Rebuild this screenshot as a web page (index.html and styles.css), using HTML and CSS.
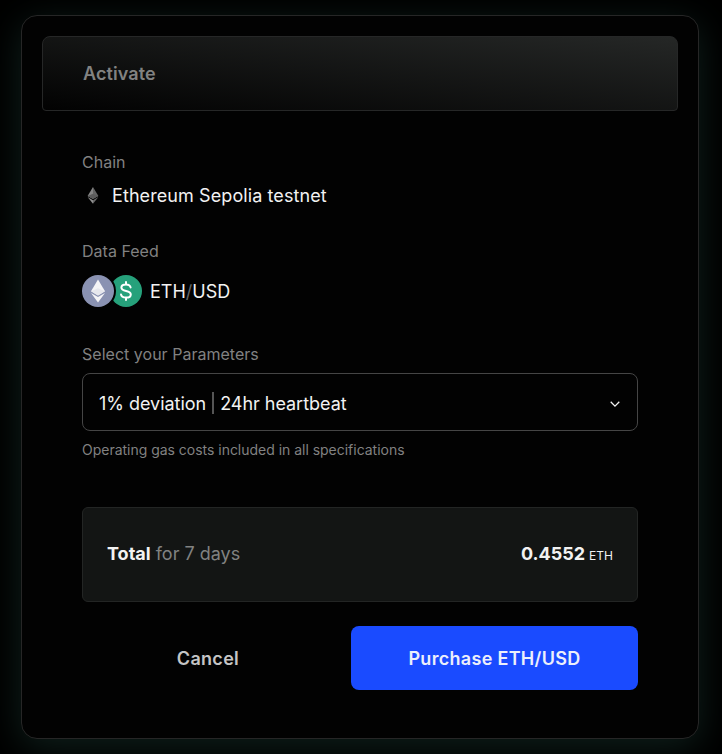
FILE: index.html
```html
<!DOCTYPE html>
<html lang="en">
<head>
<meta charset="utf-8">
<title>Activate</title>
<link rel="stylesheet" href="styles.css">
</head>
<body>
<main class="card">
  <header class="card-header"><h1>Activate</h1></header>
  <div class="content">
    <section class="chain">
      <div class="label">Chain</div>
      <div class="chain-value">
        <svg class="chain-icon" width="22" height="22" viewBox="0 0 22 22">
          <path fill="#858585" d="M11 2 5.6 11 11 14z"/><path fill="#656565" d="M11 2l5.4 9L11 14z"/>
          <path fill="#5c5c5c" d="M5.6 11 11 8.8l5.4 2.2L11 14z"/>
          <path fill="#909090" d="M5.6 12.1 11 15.2V18.8z"/><path fill="#6a6a6a" d="M16.4 12.1 11 15.2V18.8z"/>
        </svg>
        <span>Ethereum Sepolia testnet</span>
      </div>
    </section>
    <section class="feed">
      <div class="label">Data Feed</div>
      <div class="feed-value">
        <svg width="60" height="32" viewBox="0 0 60 32">
          <circle cx="44" cy="16" r="16" fill="#26a17b"/>
          <circle cx="16" cy="16" r="18" fill="#020202"/>
          <circle cx="16" cy="16" r="16" fill="#8a92b2"/>
          <path fill="#f4f4f6" d="M16 4.5 9 16.2l7 4.2 7-4.2z"/>
          <path fill="#e6e7ed" d="M16 13.2l-7 3 7 4.2 7-4.2z"/>
          <path fill="#f4f4f6" d="M9 17.9l7 4.2 7-4.2-7 9.6z"/>
          <path fill="none" stroke="#fff" stroke-width="2" stroke-linecap="round" stroke-linejoin="round" d="M44 7v2.4M44 22.6V25M48.6 12.4c-.4-2-2-3-4.6-3-2.8 0-4.6 1.2-4.6 3.2 0 4.7 9.4 2.1 9.4 6.8 0 2-1.9 3.2-4.8 3.2s-4.7-1.1-5-3.2"/>
        </svg>
        <span class="pair">ETH<span class="muted">/</span>USD</span>
      </div>
    </section>
    <section class="parameters">
      <div class="label">Select your Parameters</div>
      <button class="select" type="button">
        <span class="option">1% deviation<i class="divider"></i>24hr heartbeat</span>
        <svg width="12" height="12" viewBox="0 0 12 12"><path d="M1.7 3.8 6 8.1l4.3-4.3" fill="none" stroke="#f2f2f2" stroke-width="1.3"/></svg>
      </button>
      <p class="hint">Operating gas costs included in all specifications</p>
    </section>
    <section class="total">
      <div class="summary"><strong>Total</strong> <span class="period">for 7 days</span></div>
      <div class="amount"><strong>0.4552</strong><small>ETH</small></div>
    </section>
    <footer class="actions">
      <button class="cancel" type="button">Cancel</button>
      <button class="purchase" type="button">Purchase ETH/USD</button>
    </footer>
  </div>
</main>
</body>
</html>
```
FILE: styles.css
```css
* { box-sizing: border-box; }
html { background: #000; }
body {
  margin: 0;
  padding: 15px 23px 15px 21px;
  height: 754px;
  overflow: hidden;
  background: #000;
  color: #f2f2f2;
  font: 400 18px/28px Inter, "Liberation Sans", sans-serif;
}
button { font: inherit; color: inherit; border: 0; padding: 0; background: none; }
.card {
  height: 724px;
  padding: 20px;
  border: 1px solid #262626;
  border-radius: 16px;
  background: #020202;
  box-shadow: 0 8px 36px #0f201c;
}
.card-header {
  display: flex;
  align-items: center;
  height: 75px;
  padding-left: 40px;
  border: 1px solid #262727;
  border-radius: 8px 8px 4px 4px;
  background: linear-gradient(to top right, #020202, #252726);
}
h1 { margin: 0; font-size: 18px; font-weight: 600; letter-spacing: .1px; color: #818281; }
.content { padding: 39px 40px 0; }
.label { font-size: 16px; line-height: 24px; letter-spacing: .02px; color: #818181; }
.chain-value { display: flex; align-items: center; gap: 8px; margin-top: 8px; letter-spacing: .09px; }
.feed { margin-top: 29px; }
.feed-value { display: flex; align-items: center; gap: 8px; margin-top: 12px; height: 32px; }
.pair { padding-top: 2px; }
.muted { color: #666; }
.parameters { margin-top: 35px; }
.select {
  display: flex;
  align-items: center;
  justify-content: space-between;
  width: 100%;
  height: 58px;
  margin-top: 7px;
  padding: 4px 16px 0;
  border: 1px solid #454545;
  border-radius: 8px;
}
.option { display: flex; align-items: center; letter-spacing: -.03px; }
.divider { width: 2px; height: 22px; margin: -2px 6px 0; background: #555; }
.hint { margin: 9px 0 0; font-size: 14px; line-height: 20px; letter-spacing: -.02px; color: #818181; }
.total {
  display: flex;
  align-items: center;
  justify-content: space-between;
  height: 95px;
  margin-top: 47px;
  padding: 0 24px;
  border: 1px solid #232524;
  border-radius: 6px;
  background: #131514;
}
.total strong { font-weight: 700; }
.summary { padding-bottom: 2px; }
.period { color: #818281; }
.amount { display: flex; align-items: baseline; gap: 4px; }
.amount small { font-size: 12px; }
.actions { display: flex; gap: 17px; margin-top: 24px; height: 64px; font-weight: 600; letter-spacing: .3px; }
.actions button { padding-top: 2px; letter-spacing: inherit; }
.cancel { width: 252px; color: #c5c5c5; }
.purchase { flex: 1; border-radius: 8px; background: #1a4bff; color: #eceffb; }
```
